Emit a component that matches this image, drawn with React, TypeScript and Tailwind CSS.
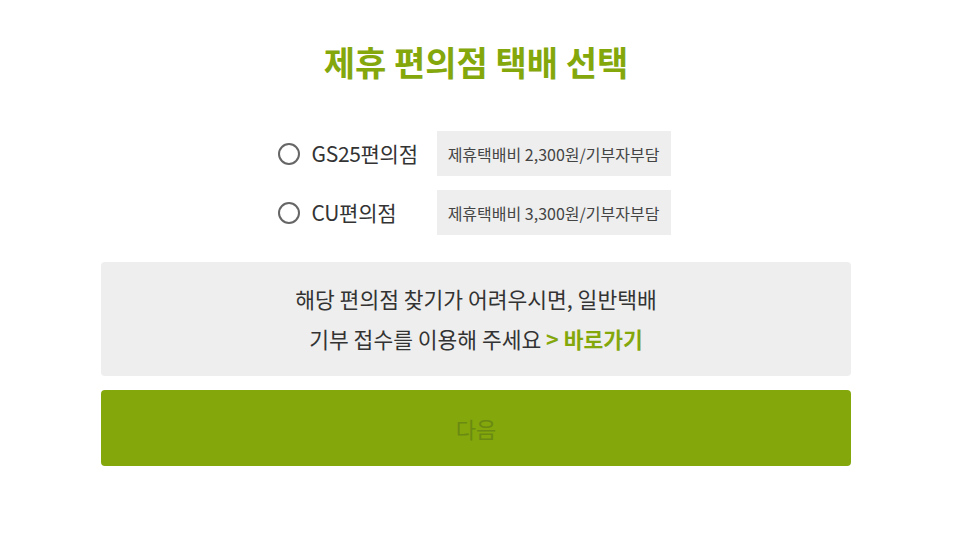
import { useState } from "react";

const stores = [
    { id: "gs25", name: "GS25편의점", fee: "제휴택배비 2,300원/기부자부담" },
    { id: "cu", name: "CU편의점", fee: "제휴택배비 3,300원/기부자부담" },
];

export default function App() {
    const [selected, setSelected] = useState<string | null>(null);

    return (
        <div
            className="min-h-screen w-full bg-white pt-[38px]"
            style={{ fontFamily: '"Noto Sans CJK KR", "Noto Sans", sans-serif' }}
        >
            <div className="ml-[101px] w-[750px]">
                <h1 className="text-center text-[34px] font-bold leading-[48px] text-[#84a70c]">
                    제휴 편의점 택배 선택
                </h1>

                <div className="mt-[45px] flex flex-col items-center gap-[14px] pr-[4px]">
                    {stores.map((store) => (
                        <label key={store.id} className="flex cursor-pointer items-center">
                            <input
                                type="radio"
                                name="store"
                                className="sr-only"
                                checked={selected === store.id}
                                onChange={() => setSelected(store.id)}
                            />
                            <span className="flex h-[22px] w-[22px] items-center justify-center rounded-full border-2 border-[#666]">
                                {selected === store.id && (
                                    <span className="h-[10px] w-[10px] rounded-full bg-[#84a70c]" />
                                )}
                            </span>
                            <span className="ml-[12px] w-[125px] text-[21px] tracking-[-0.3px] text-[#333]">
                                {store.name}
                            </span>
                            <span className="flex h-[45px] w-[234px] items-center justify-center bg-[#eeeeee] text-[16px] text-[#444]">
                                {store.fee}
                            </span>
                        </label>
                    ))}
                </div>

                <div className="mt-[27px] flex h-[114px] flex-col items-center justify-center rounded-[4px] bg-[#eeeeee] text-[21.5px] leading-[40px] text-[#333]">
                    <p>해당 편의점 찾기가 어려우시면, 일반택배</p>
                    <p>
                        기부 접수를 이용해 주세요{" "}
                        <a href="#" className="font-bold text-[#84a70c]">
                            &gt; 바로가기
                        </a>
                    </p>
                </div>

                <button
                    type="button"
                    className="mt-[14px] flex h-[76px] w-full items-center justify-center rounded-[4px] bg-[#84a70c] text-[22px] text-[#6a8a12]"
                >
                    다음
                </button>
            </div>
        </div>
    );
}
